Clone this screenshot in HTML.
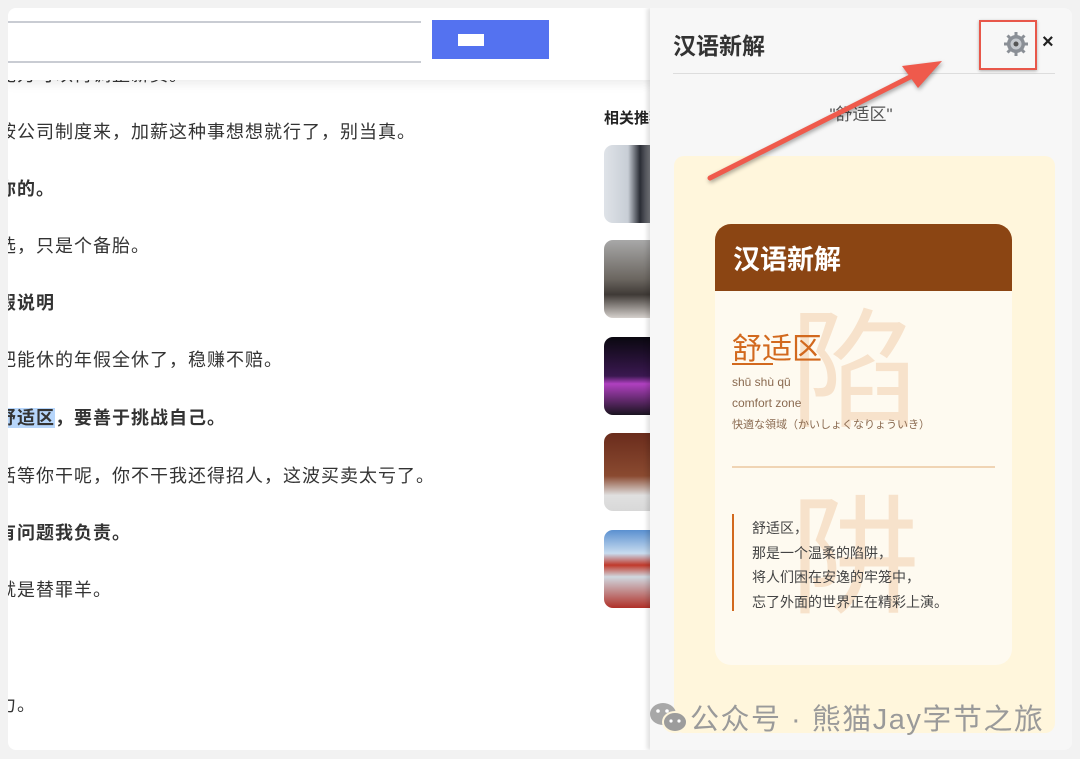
<!DOCTYPE html>
<html><head><meta charset="utf-8"><style>
*{margin:0;padding:0;box-sizing:border-box}
body{width:1080px;height:759px;background:#f2f2f2;position:relative;overflow:hidden;font-family:"Liberation Sans","Noto Sans CJK SC",sans-serif}
#main{position:absolute;left:8px;top:8px;width:1064px;height:742px;background:#fff;border-radius:8px;overflow:hidden}
.ln{position:absolute;left:-10px;font-size:18px;color:#333;white-space:nowrap;letter-spacing:1px;line-height:24px}
.b{font-weight:bold}
#bar{position:absolute;left:0;top:0;width:660px;height:72px;background:#fff;box-shadow:0 4px 10px rgba(0,0,0,.08)}
.inl{position:absolute;left:0;width:413px;height:2px;background:#c9ccd3}
#btn{position:absolute;left:424px;top:12px;width:117px;height:39px;background:#5472f0}
#btn i{position:absolute;left:26px;top:14px;width:26px;height:12px;background:#fff}
.th{position:absolute;left:596px;width:60px;height:78px;border-radius:9px;overflow:hidden}
#side{position:absolute;left:642px;top:0;width:422px;height:742px;background:#f7f7f7;box-shadow:-3px 0 4px rgba(0,0,0,.12)}
#card{position:absolute;left:24px;top:148px;width:381px;height:577px;background:#fff6dc;border-radius:10px}
#inner{position:absolute;left:41px;top:68px;width:297px;height:441px;background:#fefaf0;border-radius:16px;overflow:hidden}
#hdr{height:67px;background:#8b4513;color:#fff;font-size:27px;font-weight:bold;padding:14px 0 0 18px}
.wm{position:absolute;font-size:130px;color:#f7e2cb;font-family:"Noto Sans CJK SC",sans-serif;line-height:1}
</style></head><body>
<div id="main">
<div class="ln" style="top:55px">能力可以再调整薪资。</div>
<div class="ln" style="top:112px">按公司制度来，加薪这种事想想就行了，别当真。</div>
<div class="ln b" style="top:169px">你的。</div>
<div class="ln" style="top:226px">选，只是个备胎。</div>
<div class="ln b" style="top:283px">假说明</div>
<div class="ln" style="top:340px">把能休的年假全休了，稳赚不赔。</div>
<div class="ln b" style="top:398px"><span style="background:#b7d6fb">舒适区</span>，要善于挑战自己。</div>
<div class="ln" style="top:456px">活等你干呢，你不干我还得招人，这波买卖太亏了。</div>
<div class="ln b" style="top:513px">有问题我负责。</div>
<div class="ln" style="top:570px">就是替罪羊。</div>
<div class="ln" style="top:685px">力。</div>
<div id="bar"><div class="inl" style="top:13px"></div><div class="inl" style="top:53px"></div><div id="btn"><i></i></div></div>
<div style="position:absolute;left:596px;top:99px;font-size:15px;font-weight:bold;color:#222;white-space:nowrap">相关推荐</div>
<div class="th" style="top:137px;background:linear-gradient(90deg,#dfe3e8 0,#c8ced6 40%,#2a2d35 60%,#e8e8ea 100%)"></div>
<div class="th" style="top:232px;background:linear-gradient(180deg,#a8a8a8,#6b6660 50%,#3f3a36 70%,#d5d0cc)"></div>
<div class="th" style="top:329px;background:linear-gradient(180deg,#0a0810,#3a1850 50%,#b040c0 60%,#1a1420)"></div>
<div class="th" style="top:425px;background:linear-gradient(180deg,#6a2c1c,#8a4a30 55%,#e0e0e0 80%,#d8d8d8)"></div>
<div class="th" style="top:522px;background:linear-gradient(180deg,#5a90d0,#c8dcef 30%,#c0392b 45%,#d0d8e0 60%,#b03028)"></div>
<div id="side">
<div style="position:absolute;left:23px;top:19px;font-size:23px;font-weight:bold;color:#333">汉语新解</div>
<div style="position:absolute;left:23px;top:65px;width:382px;height:1px;background:#ddd"></div>
<svg style="position:absolute;left:353px;top:23px" width="26" height="26" viewBox="0 0 26 26"><g fill="#8a8f96"><circle cx="13" cy="13" r="9"/><g stroke="#8a8f96" stroke-width="3"><path d="M13 1v24M1 13h24M4.5 4.5l17 17M21.5 4.5l-17 17"/></g></g><circle cx="13" cy="13" r="5.5" fill="#c5c9ce"/><circle cx="13" cy="13" r="2.5" fill="#555"/></svg>
<div style="position:absolute;left:329px;top:12px;width:58px;height:50px;border:2px solid #e8574a;box-shadow:0 1px 3px rgba(0,0,0,.3)"></div>
<div style="position:absolute;left:392px;top:23px;font-size:20px;font-weight:bold;color:#222">×</div>
<div style="position:absolute;left:0;width:422px;top:92px;text-align:center;font-size:17px;color:#555">"舒适区"</div>
<div id="card">
<div id="inner">
<div class="wm" style="left:75px;top:72px">陷</div>
<div class="wm" style="left:75px;top:258px">阱</div>
<div id="hdr" style="position:relative">汉语新解</div>
<div style="position:absolute;left:17px;top:100px;font-size:30px;color:#d2691e">舒适区</div>
<div style="position:absolute;left:17px;top:139px;width:41px;height:2px;background:#d2691e"></div>
<div style="position:absolute;left:17px;top:148px;font-size:12px;color:#8a6a50;line-height:21px">shū shù qū<br>comfort zone<br><span style="font-size:11px">快適な領域（かいしょくなりょういき）</span></div>
<div style="position:absolute;left:17px;top:242px;width:263px;height:2px;background:#f0d4b4"></div>
<div style="position:absolute;left:17px;top:290px;width:2px;height:97px;background:#d2691e"></div>
<div style="position:absolute;left:37px;top:292px;font-size:14px;color:#444;line-height:24.5px">舒适区，<br>那是一个温柔的陷阱，<br>将人们困在安逸的牢笼中，<br>忘了外面的世界正在精彩上演。</div>
</div>
</div>
</div>
<svg style="position:absolute;left:0;top:0" width="1064" height="742"><g filter="drop-shadow(1px 2px 2px rgba(0,0,0,.35))"><line x1="702" y1="170" x2="912" y2="64" stroke="#ef5a4c" stroke-width="5" stroke-linecap="round"/><polygon points="934,53 894,58 910,80" fill="#ef5a4c"/></g></svg>
<svg style="position:absolute;left:640px;top:692px" width="44" height="36" viewBox="0 0 44 36"><ellipse cx="15" cy="14" rx="13" ry="11" fill="#a8a8a8"/><ellipse cx="27" cy="22" rx="12" ry="10" fill="#9c9c9c" stroke="#fff6dc" stroke-width="2"/><circle cx="10" cy="11" r="1.8" fill="#fff"/><circle cx="19" cy="11" r="1.8" fill="#fff"/><circle cx="23" cy="21" r="1.6" fill="#fff"/><circle cx="31" cy="21" r="1.6" fill="#fff"/></svg>
<div style="position:absolute;left:682px;top:688px;font-size:29px;letter-spacing:1.5px;color:#9a9a9a;white-space:nowrap">公众号 · 熊猫Jay字节之旅</div>
</div>
</body></html>
